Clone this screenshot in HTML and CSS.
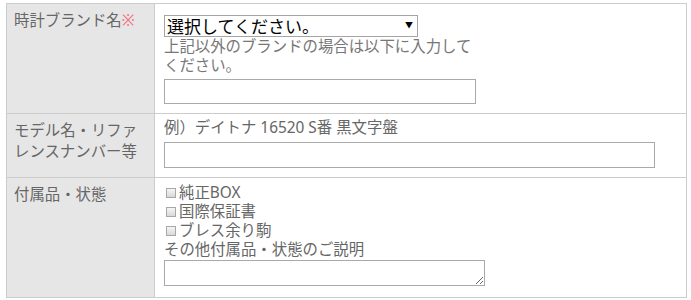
FILE: index.html
```html
<!DOCTYPE html>
<html lang="ja">
<head>
    <meta charset="UTF-8">
    <title>時計買取フォーム</title>
    <link rel="stylesheet" href="styles.css">
</head>
<body>
    <div class="form-table">
        <div class="form-label">時計ブランド名<span class="required">※</span></div>
        <div class="form-value">
            <div class="select-wrap">
                <select class="brand-select">
                    <option>選択してください。</option>
                </select>
                <span class="select-arrow">▼</span>
            </div>
            <p class="note">上記以外のブランドの場合は以下に入力してください。</p>
            <input type="text" class="input-short">
        </div>

        <div class="form-label">モデル名・リファレンスナンバー等</div>
        <div class="form-value">
            <p class="example">例）デイトナ 16520 S番 黒文字盤</p>
            <input type="text" class="input-long">
        </div>

        <div class="form-label">付属品・状態</div>
        <div class="form-value options">
            <label class="check"><input type="checkbox">純正BOX</label>
            <label class="check"><input type="checkbox">国際保証書</label>
            <label class="check"><input type="checkbox">ブレス余り駒</label>
            <p class="sub-label">その他付属品・状態のご説明</p>
            <textarea class="remarks"></textarea>
        </div>
    </div>
</body>
</html>
```

FILE: styles.css
```css
body {
    margin: 3px 0 0 6px;
    font-family: "Noto Sans", "Noto Sans CJK JP", sans-serif;
    font-size: 15.4px;
    color: #666;
    background-color: #fff;
}
p {
    margin: 0;
}
.form-table {
    display: grid;
    grid-template-columns: 148px 1fr;
    width: 681px;
    box-sizing: border-box;
    border: 1px solid #ccc;
    border-bottom: none;
}
.form-label {
    background-color: #e6e6e6;
    border-right: 1px solid #ccc;
    border-bottom: 1px solid #ccc;
    padding: 6px 7px;
    line-height: 21px;
    box-sizing: border-box;
}
.required {
    color: #f07080;
}
.form-value {
    border-bottom: 1px solid #ccc;
    padding: 11px 9px 9px;
    line-height: 19px;
}
.select-wrap {
    position: relative;
    width: 254px;
    height: 22px;
}
.brand-select {
    appearance: none;
    -webkit-appearance: none;
    width: 254px;
    height: 22px;
    margin: 0;
    padding: 0 2px;
    border: 1px solid #a5a5a5;
    border-radius: 0;
    background-color: #fff;
    font-family: "Noto Sans CJK JP", sans-serif;
    font-size: 17px;
    line-height: 20px;
    color: #000;
}
.select-arrow {
    position: absolute;
    right: 5px;
    top: 4px;
    font-size: 8px;
    line-height: 12px;
    color: #000;
    pointer-events: none;
}
.note {
    width: 312px;
    color: #777;
}
input[type="text"],
textarea {
    display: block;
    box-sizing: border-box;
    margin: 4px 0 0;
    border: 1px solid #a9a9a9;
    border-radius: 0;
    background-color: #fff;
    font-family: inherit;
}
.input-short {
    width: 312px;
    height: 25px;
}
.example {
    line-height: 21px;
    margin-top: -8px;
}
.input-long {
    width: 491px;
    height: 26px;
}
.options {
    padding-top: 5px;
    padding-bottom: 11px;
}
.check {
    display: block;
}
.check input {
    appearance: none;
    -webkit-appearance: none;
    width: 10px;
    height: 10px;
    margin: 0 3px 0 2px;
    border: 1px solid #a8a8a8;
    background: linear-gradient(#f6f6f6, #d8d8d8);
    vertical-align: 0;
}
.remarks {
    width: 321px;
    height: 26px;
    margin-top: 1px;
    resize: both;
}
```
